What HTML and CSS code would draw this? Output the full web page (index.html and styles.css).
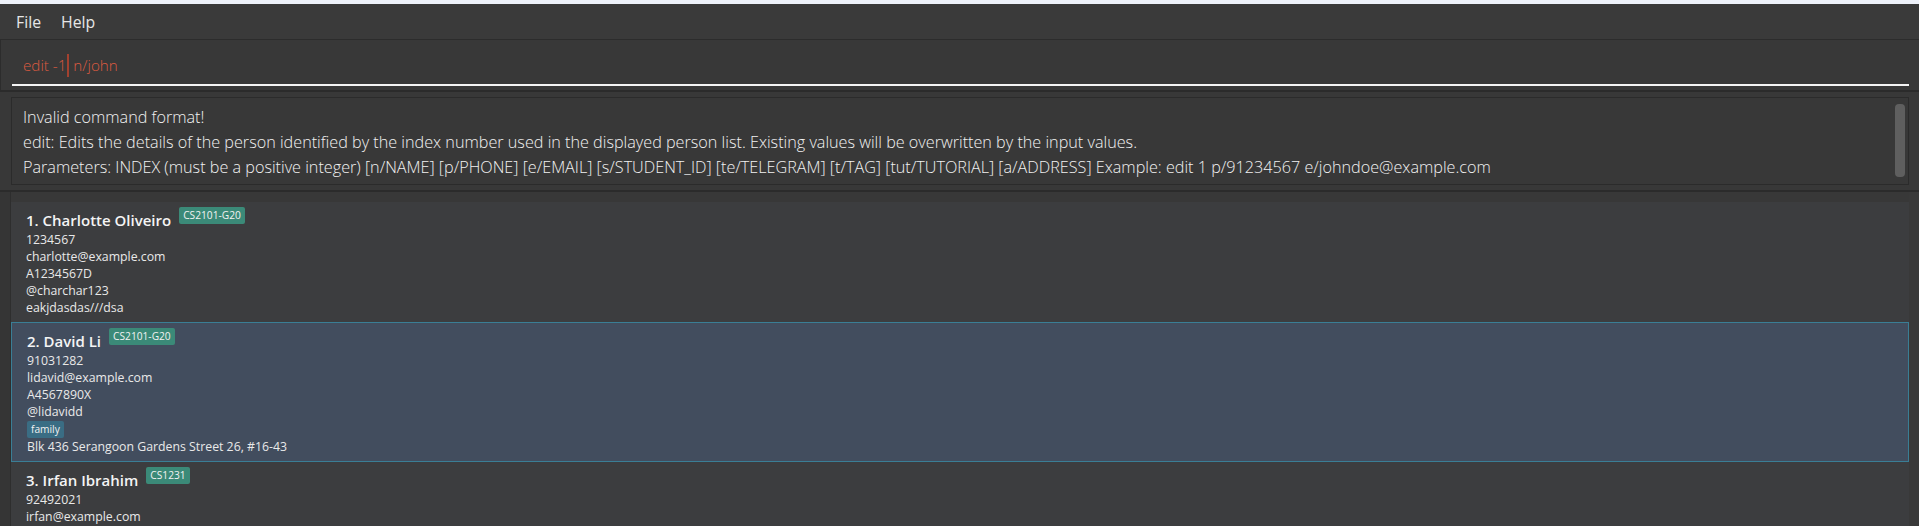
FILE: index.html
```html
<!DOCTYPE html>
<html lang="en">
<head>
<meta charset="utf-8">
<title>Address App</title>
<link rel="stylesheet" href="styles.css">
</head>
<body>
<div class="top-strip"></div>
<nav class="menubar">
  <span class="menu-item">File</span>
  <span class="menu-item">Help</span>
</nav>
<div class="command-box">
  <div class="command-field"><span class="cmd">edit -1</span><span class="caret"></span><span class="cmd">&nbsp;n/john</span></div>
</div>
<div class="result-pane">
  <div class="result-box">
    <div class="result-text">
      <div class="result-line">Invalid command format!</div>
      <div class="result-line">edit: Edits the details of the person identified by the index number used in the displayed person list. Existing values will be overwritten by the input values.</div>
      <div class="result-line">Parameters: INDEX (must be a positive integer) [n/NAME] [p/PHONE] [e/EMAIL] [s/STUDENT_ID] [te/TELEGRAM] [t/TAG] [tut/TUTORIAL] [a/ADDRESS] Example: edit 1 p/91234567 e/johndoe@example.com</div>
    </div>
    <div class="scroll-thumb"></div>
  </div>
</div>
<div class="list-pane">
  <div class="list-gutter"></div>
  <div class="person-list">
    <div class="card">
      <div class="name-row"><span class="name">1. Charlotte Oliveiro</span><span class="tag tutorial">CS2101-G20</span></div>
      <div class="detail">1234567</div>
      <div class="detail">charlotte@example.com</div>
      <div class="detail">A1234567D</div>
      <div class="detail">@charchar123</div>
      <div class="detail">eakjdasdas///dsa</div>
    </div>
    <div class="card selected">
      <div class="name-row"><span class="name">2. David Li</span><span class="tag tutorial">CS2101-G20</span></div>
      <div class="detail">91031282</div>
      <div class="detail">lidavid@example.com</div>
      <div class="detail">A4567890X</div>
      <div class="detail">@lidavidd</div>
      <div class="detail tag-line"><span class="tag family">family</span></div>
      <div class="detail">Blk 436 Serangoon Gardens Street 26, #16-43</div>
    </div>
    <div class="card">
      <div class="name-row"><span class="name">3. Irfan Ibrahim</span><span class="tag tutorial">CS1231</span></div>
      <div class="detail">92492021</div>
      <div class="detail">irfan@example.com</div>
    </div>
  </div>
  <div class="list-track"></div>
</div>
</body>
</html>
```

FILE: styles.css
```css
html, body {
  margin: 0;
  padding: 0;
  height: 526px;
  overflow: hidden;
}

body {
  background: #383838;
  font-family: "Open Sans", "Noto Sans", sans-serif;
  color: #ececec;
}

.top-strip {
  height: 4px;
  background: #eef2fa;
}

.menubar {
  height: 35px;
  display: flex;
  align-items: center;
  gap: 20px;
  padding-left: 16px;
  background: #3a3a3a;
  border-bottom: 1px solid #2c2c2c;
  font-size: 15.8px;
  color: #e6e6e6;
}

.command-box {
  height: 52px;
  box-sizing: border-box;
  background: #383838;
  border-left: 1px solid #2c2c2c;
  border-bottom: 2px solid #2b2b2b;
  padding: 6px 10px 0 11px;
}

.command-field {
  height: 38px;
  line-height: 38px;
  border-bottom: 2px solid #f4f4f4;
  padding-left: 11px;
  font-size: 15.2px;
  font-weight: 300;
  color: #dc5a40;
  display: flex;
  align-items: center;
  white-space: pre;
}

.caret {
  display: inline-block;
  width: 2px;
  height: 23px;
  margin-left: 1px;
  background: #a3412f;
}

.result-pane {
  height: 100px;
  box-sizing: border-box;
  padding: 5px 10px 5px 11px;
  background: #383838;
  border-bottom: 2px solid #2b2b2b;
}

.result-box {
  position: relative;
  height: 88px;
  box-sizing: border-box;
  border: 1px solid #2b2b2b;
  padding: 7px 11px 0 11px;
}

.result-line {
  font-size: 16.2px;
  font-weight: 300;
  line-height: 25px;
  color: #f2f2f2;
  white-space: nowrap;
}

.scroll-thumb {
  position: absolute;
  top: 6px;
  right: 3px;
  width: 10px;
  height: 73px;
  border-radius: 4px;
  background: #5f5f5f;
}

.list-pane {
  display: flex;
  height: 334px;
  overflow: hidden;
}

.list-gutter {
  width: 10px;
  background: #353535;
  border-right: 1px solid #2e2e2e;
}

.person-list {
  flex: 1;
  padding-top: 10px;
  background: #383838;
}

.list-track {
  width: 10px;
  background: #393939;
}

.card {
  background: #3c3d3f;
  padding: 7px 0 6px 15px;
}

.card.selected {
  background: #424d5e;
  border: 1px solid #3a7e95;
}

.name-row {
  display: flex;
  align-items: flex-start;
  height: 22px;
  gap: 8px;
}

.name {
  font-size: 15px;
  font-weight: 600;
  line-height: 22px;
  color: #f4f4f4;
}

.tag {
  display: inline-block;
  font-size: 10.2px;
  line-height: 17px;
  height: 17px;
  padding: 0 4px;
  border-radius: 2px;
  color: #f2f2f2;
}

.name-row .tag {
  margin-top: -2px;
}

.tag.tutorial {
  background: #3b8a78;
}

.tag.family {
  background: #3a6d84;
}

.detail {
  font-size: 12.3px;
  line-height: 17px;
  height: 17px;
  color: #e9e9e9;
  white-space: nowrap;
}

.detail.tag-line {
  height: 18px;
}
```
